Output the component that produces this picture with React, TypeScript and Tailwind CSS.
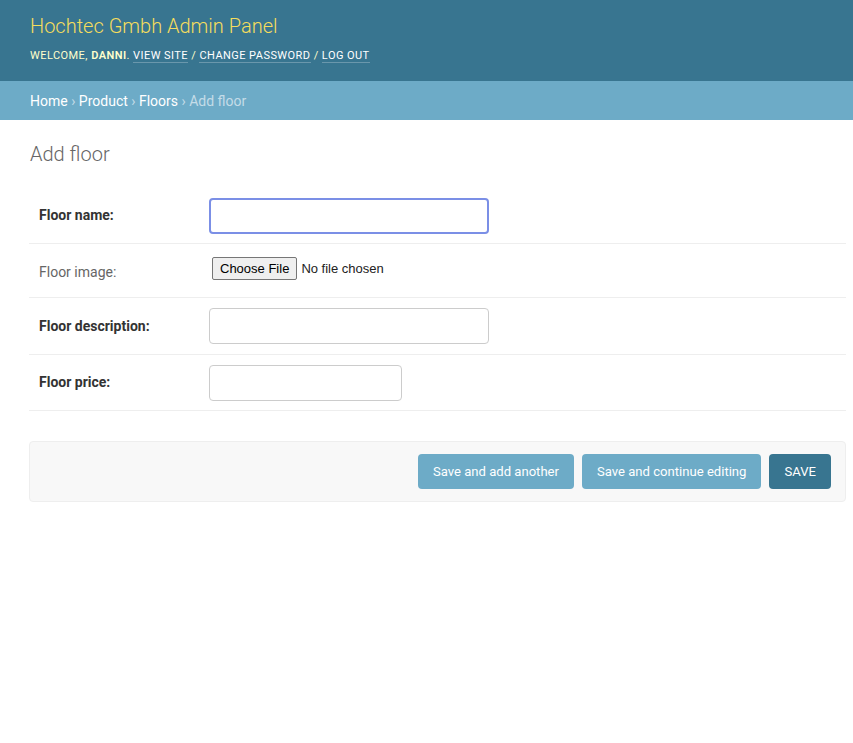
const font = { fontFamily: "Roboto, 'Liberation Sans', sans-serif" };

// Form row for the add page
function FormRow({
  label,
  required,
  height,
  labelPad = "",
  children,
}: {
  label: string;
  required?: boolean;
  height: string;
  labelPad?: string;
  children: React.ReactNode;
}) {
  return (
    <div className={`flex items-center border-b border-[#eeeeee] px-[10px] ${height}`}>
      <label
        className={`w-[170px] shrink-0 pr-[10px] text-[14px] ${labelPad} ${
          required ? "font-bold text-[#333333]" : "text-[#666666]"
        }`}
      >
        {label}
      </label>
      {children}
    </div>
  );
}

export default function App() {
  return (
    <div className="min-h-[743px] bg-white" style={font}>
      {/* Header */}
      <header className="h-[81px] bg-[#387590] px-[30px] pt-[14px]">
        <div className="text-[20px] font-light leading-[24px] text-[#f5dd5d]">
          Hochtec Gmbh Admin Panel
        </div>
        <div className="mt-[11px] text-[11px] uppercase leading-[14px] tracking-[0.45px] text-[#ffffcc]">
          Welcome, <strong className="font-semibold">Danni</strong>.{" "}
          <a className="border-b border-white/25 text-white">View site</a> /{" "}
          <a className="border-b border-white/25 text-white">Change password</a> /{" "}
          <a className="border-b border-white/25 text-white">Log out</a>
        </div>
      </header>

      {/* Breadcrumbs */}
      <div className="bg-[#6dabc7] px-[30px] pt-[11px] pb-[9px] text-[14px] leading-[19px] text-[#c4dce8]">
        <a className="text-white">Home</a> › <a className="text-white">Product</a> ›{" "}
        <a className="text-white">Floors</a> › Add floor
      </div>

      {/* Content */}
      <main className="pl-[29px] pr-[7px] pt-[20px]">
        <h1 className="mb-[20px] pl-px text-[20px] font-light leading-[28px] text-[#666666]">
          Add floor
        </h1>

        <div>
          <FormRow label="Floor name:" required height="h-[56px]">
            <input
              type="text"
              autoFocus
              className="h-[36px] w-[280px] rounded-[4px] border-2 border-[#7b8fe6] px-[6px] text-[14px] outline-none"
            />
          </FormRow>
          <FormRow label="Floor image:" height="h-[54px]" labelPad="pt-[4px]">
            <input
              type="file"
              className="mb-[4px] ml-[3px] text-[13px] text-[#222222] file:mr-[4px] file:rounded-[2px] file:border file:border-[#767676] file:bg-[#efefef] file:px-[7px] file:py-[1px] file:text-[13px] file:text-black"
              style={{ fontFamily: "'Liberation Sans', Arial, sans-serif" }}
            />
          </FormRow>
          <FormRow label="Floor description:" required height="h-[57px]">
            <input
              type="text"
              className="h-[36px] w-[280px] rounded-[4px] border border-[#cccccc] px-[6px] text-[14px] outline-none"
            />
          </FormRow>
          <FormRow label="Floor price:" required height="h-[56px]">
            <input
              type="text"
              className="h-[36px] w-[193px] rounded-[4px] border border-[#cccccc] px-[6px] text-[14px] outline-none"
            />
          </FormRow>
        </div>

        {/* Submit row */}
        <div className="mt-[30px] flex justify-end gap-[8px] rounded-[4px] border border-[#eeeeee] bg-[#f8f8f8] px-[14px] py-[12px]">
          <button className="h-[35px] rounded-[4px] bg-[#6dabc7] px-[15px] text-[13.1px] text-white">
            Save and add another
          </button>
          <button className="h-[35px] rounded-[4px] bg-[#6dabc7] px-[15px] text-[13.1px] text-white">
            Save and continue editing
          </button>
          <button className="h-[35px] rounded-[4px] bg-[#387590] px-[15px] text-[13.1px] uppercase text-white">
            Save
          </button>
        </div>
      </main>
    </div>
  );
}
